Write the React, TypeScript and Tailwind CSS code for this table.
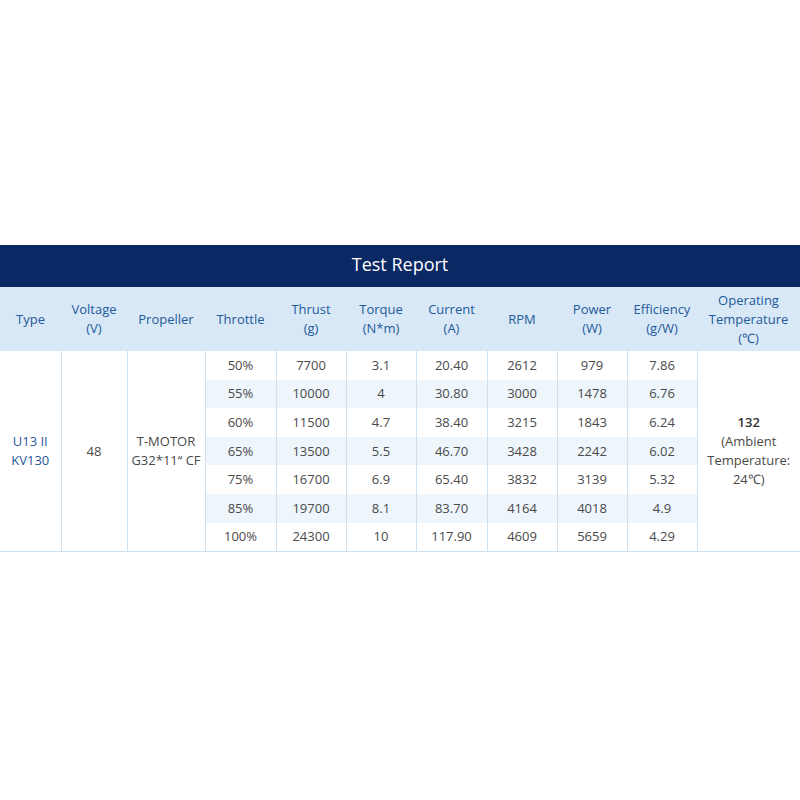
const headers: string[][] = [
  ['Type'],
  ['Voltage', '(V)'],
  ['Propeller'],
  ['Throttle'],
  ['Thrust', '(g)'],
  ['Torque', '(N*m)'],
  ['Current', '(A)'],
  ['RPM'],
  ['Power', '(W)'],
  ['Efficiency', '(g/W)'],
  ['Operating', 'Temperature', '(℃)'],
];

const widths = [61, 66, 78, 71, 70, 70, 71, 70, 70, 70, 103];

const rows = [
  ['50%', '7700', '3.1', '20.40', '2612', '979', '7.86'],
  ['55%', '10000', '4', '30.80', '3000', '1478', '6.76'],
  ['60%', '11500', '4.7', '38.40', '3215', '1843', '6.24'],
  ['65%', '13500', '5.5', '46.70', '3428', '2242', '6.02'],
  ['75%', '16700', '6.9', '65.40', '3832', '3139', '5.32'],
  ['85%', '19700', '8.1', '83.70', '4164', '4018', '4.9'],
  ['100%', '24300', '10', '117.90', '4609', '5659', '4.29'],
];

export default function App() {
  return (
    <div className="w-[800px] h-[800px] bg-white pt-[245px] font-['Open_Sans',sans-serif]">
      <div className="h-[42px] bg-[#0a2864] flex items-center justify-center pb-[3px] text-white text-[18px]">
        Test Report
      </div>
      <table className="w-[800px] table-fixed border-collapse text-[13px] leading-[19px]">
        <colgroup>
          {widths.map((w, i) => (
            <col key={i} style={{ width: w }} />
          ))}
        </colgroup>
        <thead>
          <tr className="h-[64px] bg-[#d8e8f6]">
            {headers.map((h, i) => (
              <th key={i} className="font-medium text-[#1f5a9a] text-center align-middle p-0">
                {h.map((line, j) => (
                  <div key={j}>{line}</div>
                ))}
              </th>
            ))}
          </tr>
        </thead>
        <tbody className="text-[#4a4a4a]">
          {rows.map((r, i) => (
            <tr key={i} className={i % 2 === 1 ? 'h-[28.6px] bg-[#eef6fc]' : 'h-[28.6px]'}>
              {i === 0 && (
                <>
                  <td rowSpan={7} className="border-r border-[#cfe0ee] bg-white text-center text-[#1f5a9a]">
                    <div>U13 II</div>
                    <div>KV130</div>
                  </td>
                  <td rowSpan={7} className="border-r border-[#cfe0ee] bg-white text-center">
                    48
                  </td>
                  <td rowSpan={7} className="border-r border-[#cfe0ee] bg-white text-center">
                    <div>T-MOTOR</div>
                    <div>G32*11“ CF</div>
                  </td>
                </>
              )}
              {r.map((v, j) => (
                <td key={j} className="border-r border-[#cfe0ee] text-center p-0">
                  {v}
                </td>
              ))}
              {i === 0 && (
                <td rowSpan={7} className="bg-white text-center">
                  <div className="font-semibold text-[#333]">132</div>
                  <div>(Ambient</div>
                  <div>Temperature:</div>
                  <div>24℃)</div>
                </td>
              )}
            </tr>
          ))}
        </tbody>
      </table>
      <div className="h-px bg-[#cfe0ee]" />
    </div>
  );
}
